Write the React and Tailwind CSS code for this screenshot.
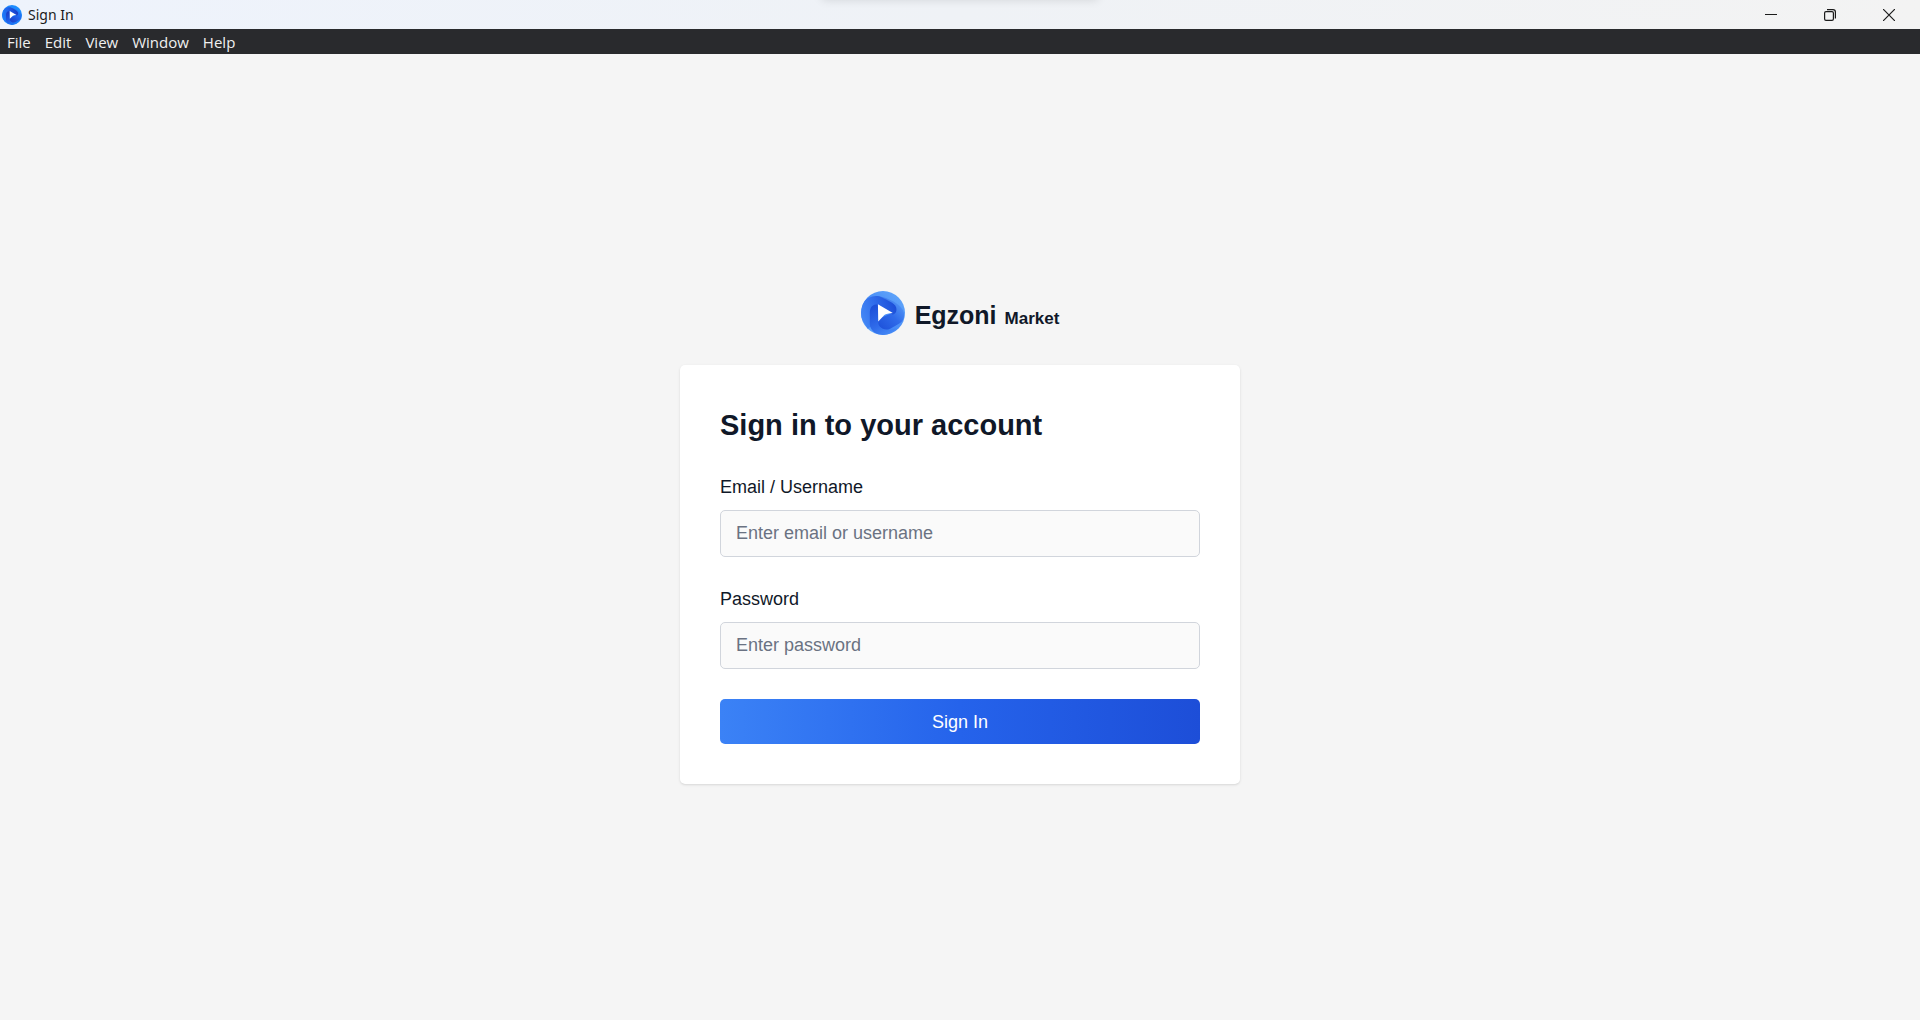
import { useId } from "react";

const SOFT = { light: "#60a5fa", rim: "#4489f6", mid: "#2f6bea", deep: "#1c4fd8" };
const VIVID = { light: "#1e90ff", rim: "#1c80fb", mid: "#2060ea", deep: "#1a3cc4" };

function Logo({ className, palette = SOFT }) {
  const id = useId();
  const { light, rim, mid, deep } = palette;
  return (
    <svg className={className} viewBox="0 0 130 130" aria-hidden="true">
      <defs>
        <linearGradient id={`${id}a`} x1="0.1" y1="0.9" x2="0.9" y2="0.1">
          <stop offset="0" stopColor={light} />
          <stop offset="0.4" stopColor={rim} />
          <stop offset="1" stopColor={light} />
        </linearGradient>
        <linearGradient id={`${id}b`} x1="0" y1="0.7" x2="1" y2="0.4">
          <stop offset="0" stopColor={rim} />
          <stop offset="0.5" stopColor={mid} />
          <stop offset="1" stopColor={deep} />
        </linearGradient>
        <linearGradient id={`${id}c`} x1="0.9" y1="0" x2="0.1" y2="1">
          <stop offset="0" stopColor={light} />
          <stop offset="0.5" stopColor={mid} />
          <stop offset="1" stopColor={deep} />
        </linearGradient>
        <linearGradient id={`${id}d`} x1="0.2" y1="0" x2="0.7" y2="1">
          <stop offset="0" stopColor={deep} />
          <stop offset="0.6" stopColor={mid} />
          <stop offset="1" stopColor={rim} />
        </linearGradient>
        <clipPath id={`${id}e`}>
          <circle cx="65" cy="65" r="65" />
        </clipPath>
      </defs>
      <g clipPath={`url(#${id}e)`}>
        <rect width="130" height="130" fill={`url(#${id}a)`} />
        <path d="M46 15C62 15 108 30 124 56C132 74 126 88 112 97L80 115C62 122 50 112 48 96L48 84L98 62L100 40Z" fill={`url(#${id}c)`} />
        <path d="M0 80C-2 40 10 17 44 15C56 15 64 20 92 35Q101 40 104 49C106 60 104 66 94 70L51 42L46 90L20 112Z" fill={`url(#${id}b)`} />
        <path d="M51 41C36 36 26 48 26 64L26 98C27 116 44 130 64 130C80 130 92 124 104 110C80 118 51 114 51 92Z" fill={`url(#${id}d)`} />
      </g>
      <path d="M50 39L94 65Q76 66 69 71L51 90Z" fill="#fff" />
    </svg>
  );
}

function TitleBar() {
  const control = "flex h-full w-[59px] items-center justify-center text-[#1b1b1b]";
  return (
    <header className="relative flex h-[29px] items-center bg-gradient-to-r from-[#eef3fc] via-[#eff2f6] to-[#f3f3f3] pr-[2px]">
      <Logo className="ml-[2px] size-5" palette={VIVID} />
      <span className="ml-[6px] flex-1 font-['Noto_Sans','Open_Sans',sans-serif] text-[14px] leading-5 text-[#1b1b1b]">
        Sign In
      </span>
      <button type="button" aria-label="Minimize" className={control}>
        <svg className="size-3" viewBox="0 0 12 12" stroke="currentColor"><path d="M0 5.5H12" /></svg>
      </button>
      <button type="button" aria-label="Restore" className={control}>
        <svg className="size-3" viewBox="0 0 12 12" fill="none" stroke="currentColor" strokeWidth="1.2">
          <rect x="0.6" y="2.6" width="8.8" height="8.8" rx="1.4" />
          <path d="M3 0.6H9Q11.4 0.6 11.4 3V9.4" />
        </svg>
      </button>
      <button type="button" aria-label="Close" className={control}>
        <svg className="size-3" viewBox="0 0 12 12" stroke="currentColor" strokeWidth="1.2"><path d="M0 0L12 12M12 0L0 12" /></svg>
      </button>
      <div className="pointer-events-none absolute inset-x-0 top-0 flex h-3 justify-center overflow-hidden">
        <div className="-mt-3 h-3 w-[276px] shadow-[0_0_10px_rgba(0,0,0,0.12)]" />
      </div>
    </header>
  );
}

function MenuBar() {
  return (
    <nav className="flex h-[25px] items-center gap-[14px] bg-[#292a2d] px-[7px] font-['Open_Sans','Noto_Sans',sans-serif] text-[15px] leading-5 text-[#f0f0f0]">
      {["File", "Edit", "View", "Window", "Help"].map((item) => (
        <button key={item} type="button">{item}</button>
      ))}
    </nav>
  );
}

function Field({ id, label, ...props }) {
  return (
    <div>
      <label htmlFor={id} className="mb-[10px] block text-lg leading-[25px] text-gray-900">{label}</label>
      <input
        id={id}
        className="block h-[47px] w-full rounded-[5px] border border-gray-300 bg-[#fafafa] px-[15px] text-lg leading-6 text-gray-900 placeholder:text-gray-500"
        {...props}
      />
    </div>
  );
}

export default function App() {
  return (
    <div className="flex min-h-screen flex-col bg-[#f5f5f5] font-['Liberation_Sans',Arial,sans-serif]">
      <TitleBar />
      <MenuBar />
      <main className="flex flex-1 flex-col items-center justify-center pt-px">
        <div className="mb-[30px] flex items-center text-gray-900">
          <Logo className="mr-[10px] size-11" />
          <div className="flex items-baseline gap-2 pt-1 font-bold">
            <span className="text-[25px] leading-10">Egzoni</span>
            <span className="text-[17px]">Market</span>
          </div>
        </div>
        <form className="w-full max-w-[560px] rounded-[5px] bg-white p-10 shadow" onSubmit={(e) => e.preventDefault()}>
          <h1 className="mb-[30px] text-[29px] leading-10 font-bold text-gray-900">Sign in to your account</h1>
          <div className="flex flex-col gap-[30px]">
            <Field id="username" label="Email / Username" type="text" placeholder="Enter email or username" />
            <Field id="password" label="Password" type="password" placeholder="Enter password" />
            <button type="submit" className="h-[45px] w-full rounded-[5px] bg-linear-to-r/srgb from-[#3b82f6] via-[#2563eb] to-[#1d4ed8] text-lg text-white">
              Sign In
            </button>
          </div>
        </form>
      </main>
    </div>
  );
}
